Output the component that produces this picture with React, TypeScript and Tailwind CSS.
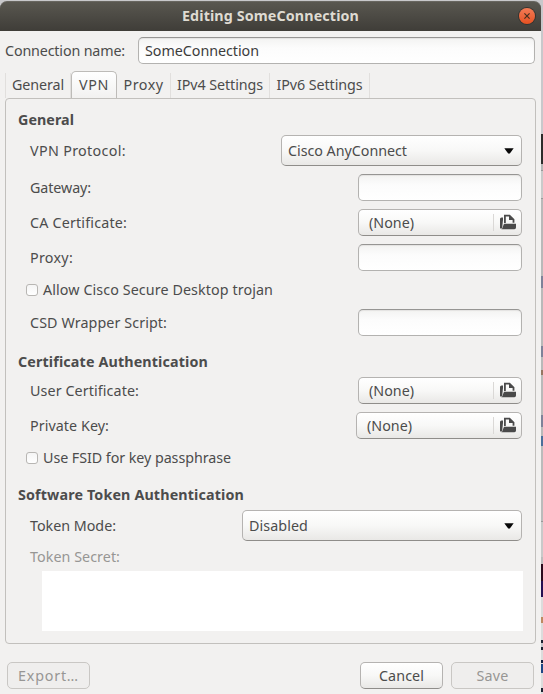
import { useLayoutEffect, useRef, useState } from "react";
import type { ReactNode } from "react";
import clsx from "clsx";

/** Single line label whose tracking is adjusted so it fills the given width. */
function Label({ text, w, className }: { text: string; w: number; className?: string }) {
  const ref = useRef<HTMLSpanElement>(null);
  const [tracking, setTracking] = useState(0);
  useLayoutEffect(() => {
    if (ref.current) {
      const natural = ref.current.getBoundingClientRect().width;
      setTracking((w - natural) / text.length);
    }
  }, [text, w]);
  return (
    <span ref={ref} className={clsx("inline-block shrink-0 whitespace-nowrap", className)} style={{ letterSpacing: tracking }}>
      {text}
    </span>
  );
}

function Heading({ text, w, className }: { text: string; w: number; className: string }) {
  return (
    <h2 className={clsx("flex h-5 items-center pl-3 font-bold", className)}>
      <Label text={text} w={w} />
    </h2>
  );
}

function Row({ text, w, className, children }: { text: string; w: number; className?: string; children: ReactNode }) {
  return (
    <div className={clsx("flex items-center justify-between pr-[13px] pl-6", className)}>
      <Label text={text} w={w} />
      {children}
    </div>
  );
}

const entry =
  "rounded-[5px] border border-[#b3b2b0] border-t-[#969593] bg-linear-to-b from-[#f3f3f2] via-[#fcfcfc] via-40% to-white shadow-[inset_0_1px_1px_#e4e3e2]";
const button =
  "rounded-[5px] border border-[#b5b3b1] border-b-[#8f8d8a] bg-linear-to-b from-white via-[#f8f8f7] to-[#e9e8e6]";

function Entry() {
  return <div className={clsx("h-[27px] w-[164px]", entry)} />;
}

function Select({ text, w, className }: { text: string; w: number; className: string }) {
  return (
    <div className={clsx("flex h-[31px] items-center justify-between pr-[7px] pl-1.5", button, className)}>
      <Label text={text} w={w} />
      <svg width="10" height="6" viewBox="0 0 10 6">
        <path d="M.3.3h9.400L6 5.200q-1 .9-2 0Z" fill="#080808" />
      </svg>
    </div>
  );
}

function FileButton({ className }: { className: string }) {
  return (
    <div className={clsx("flex h-[27px] items-center pr-[5px] pl-2.5", button, className)}>
      <Label text="(None)" w={45} />
      <div className="ml-auto h-[17px] w-px bg-[#dad8d6]" />
      <svg className="mb-0.5 ml-1.5" width="16" height="16" viewBox="0 0 16 16">
        <path d="M0 5q0-1.500 1.500-1.500H3v2.200L2.200 13.500 1.300 14.800Q0 14.800 0 13.500Z" fill="#4a4a4a" />
        <path d="M4 9.800h12v3.800q0 1.700-1.600 1.700H1.300Q2.600 14.800 2.900 12.500Z" fill="#4a4a4a" />
        <path d="M4.900 9V1.700h4.600l4 3.900V8.700" fill="none" stroke="#4a4a4a" strokeWidth="1.800" />
        <path d="M9 1v5h5.300Z" fill="#4a4a4a" />
      </svg>
    </div>
  );
}

function Check({ text, w }: { text: string; w: number }) {
  return (
    <div className="mt-[9px] flex h-5 items-center pl-5">
      <div className="mr-[5px] h-3 w-3 rounded-[3px] border border-[#b8b6b3] bg-linear-to-b from-[#f5f5f5] to-white" />
      <Label text={text} w={w} />
    </div>
  );
}

function Tab({ text, w, active, className }: { text: string; w: number; active?: boolean; className: string }) {
  return (
    <div
      className={clsx(
        "flex items-center justify-center",
        active
          ? "h-[27px] rounded-t-[5px] border border-b-0 border-[#bdbbb8] bg-linear-to-b from-white to-[#f2f1f0]"
          : "h-[25px] border-r border-[#e1dfdd] pb-0.5",
        className,
      )}
    >
      <Label text={text} w={w} />
    </div>
  );
}

/** Slices of the desktop visible past the window's right edge. */
const desktop = [
  "h-[134px] bg-[#c8c8cb]",
  "h-[30px] bg-[#2d2c2b]",
  "h-[6px] bg-[#b5b5b5]",
  "h-px bg-[#999]",
  "h-[27px] bg-[#cacaca]",
  "h-px bg-[#999]",
  "h-[77px] bg-[#b9b9b9]",
  "h-[12px] bg-[#7e8299]",
  "h-[58px] bg-[#b9b9b9]",
  "h-[11px] bg-[#7e8299]",
  "h-[13px] bg-[#b9b9b9]",
  "h-[5px] bg-[#957762]",
  "h-[40px] bg-[#b9b9b9]",
  "h-[12px] bg-[#7e8299]",
  "h-[9px] bg-[#b9b9b9]",
  "h-[10px] bg-[#4a6f9b]",
  "h-[75px] bg-[#bbb]",
  "h-px bg-[#999]",
  "h-[35px] bg-[#c9c9c9]",
  "h-[7px] bg-[#bbb]",
  "h-[17px] bg-[#2b0b1d]",
  "h-[16px] bg-[#251052]",
  "h-[20px] bg-[#dcdcdc]",
  "h-[6px] bg-[#bd8960]",
  "h-[17px] bg-[#dcdcdc]",
  "h-[3px] bg-[#1c2030]",
  "h-[4px] bg-[#c5c5cb]",
  "h-[3px] bg-[#1c2030]",
  "h-[10px] bg-[#dcdcdc]",
  "h-[3px] bg-[#111d3d]",
  "h-px bg-[#dcdcdc]",
  "h-[9px] bg-[#1d4685]",
  "h-[15px] bg-[#dcdcdc]",
  "h-[4px] bg-[#1b2231]",
  "h-[3px] bg-[#dcdcdc]",
];

export default function App() {
  return (
    <div className="flex h-[694px] w-[543px] overflow-hidden bg-[#c8c8cb] font-['Noto_Sans',sans-serif] text-[14.3px] leading-5 text-[#4c4c4c]">
      <div className="flex w-[541px] shrink-0 flex-col pt-px">
        <header className="flex h-[30px] shrink-0 items-center rounded-t-[7px] border-t border-[#686660] bg-linear-to-b from-[#595750] to-[#3f3d38] pr-1.5 pb-px pl-[182px] font-bold text-[#dfdbd2]">
          <Label text="Editing SomeConnection" w={177} />
          <div className="ml-auto flex h-4 w-4 items-center justify-center rounded-full bg-linear-to-b from-[#f37b55] to-[#e5501f] shadow-[0_0_0_1px_#35332f]">
            <svg width="6" height="6" viewBox="0 0 6 6">
              <path d="M.4.4l5.200 5.200M5.600.4L.4 5.600" stroke="#45301f" strokeWidth="1.200" />
            </svg>
          </div>
        </header>
        <main className="flex grow flex-col bg-[#f2f1f0]">
          <div className="mt-1.5 flex h-[27px] items-center pl-[5px]">
            <Label text="Connection name:" w={120} />
            <div className={clsx("ml-[13px] flex h-[27px] w-[397px] items-center pl-1.5 text-[#3c3c3c]", entry)}>
              <Label text="SomeConnection" w={114} />
            </div>
          </div>
          <nav className="mt-[7px] flex h-[27px] items-end pl-[5px]">
            <Tab text="General" w={52} className="w-[66px] border-l" />
            <Tab text="VPN" w={30} active className="w-[46px]" />
            <Tab text="Proxy" w={40} className="w-[54px]" />
            <Tab text="IPv4 Settings" w={86} className="w-[99px]" />
            <Tab text="IPv6 Settings" w={86} className="w-[100px]" />
          </nav>
          <section className="ml-[5px] h-[546px] w-[531px] rounded-[4px] border border-[#c2c0bd]">
            <Heading text="General" w={56} className="mt-[11px]" />
            <Row text="VPN Protocol:" w={96} className="mt-[5px]">
              <Select text="Cisco AnyConnect" w={119} className="w-[241px]" />
            </Row>
            <Row text="Gateway:" w={61} className="mt-2">
              <Entry />
            </Row>
            <Row text="CA Certificate:" w={97} className="mt-2">
              <FileButton className="w-[164px]" />
            </Row>
            <Row text="Proxy:" w={43} className="mt-2">
              <Entry />
            </Row>
            <Check text="Allow Cisco Secure Desktop trojan" w={230} />
            <Row text="CSD Wrapper Script:" w={137} className="mt-[9px]">
              <Entry />
            </Row>
            <Heading text="Certificate Authentication" w={190} className="mt-4" />
            <Row text="User Certificate:" w={109} className="mt-[5px]">
              <FileButton className="w-[164px]" />
            </Row>
            <Row text="Private Key:" w={79} className="mt-2">
              <FileButton className="w-[166px]" />
            </Row>
            <Check text="Use FSID for key passphrase" w={188} />
            <Heading text="Software Token Authentication" w={226} className="mt-[17px]" />
            <Row text="Token Mode:" w={86} className="mt-[5px]">
              <Select text="Disabled" w={59} className="w-[280px]" />
            </Row>
            <div className="mt-1.5 flex h-5 items-center pl-6 text-[#979694]">
              <Label text="Token Secret:" w={90} />
            </div>
            <div className="mt-1 ml-9 h-[60px] w-[481px] bg-white" />
          </section>
          <footer className="mt-[18px] flex h-[27px] gap-2 pr-[7px] pl-[7px]">
            <div className="mr-auto flex w-[83px] items-center justify-center rounded-[5px] border border-[#c9c7c4] bg-[#efeeed] text-[#979694]">
              <Label text="Export…" w={61} />
            </div>
            <div className={clsx("flex w-[83px] items-center justify-center", button)}>
              <Label text="Cancel" w={45} />
            </div>
            <div className="flex w-[83px] items-center justify-center rounded-[5px] border border-[#c9c7c4] bg-[#efeeed] text-[#979694]">
              <Label text="Save" w={32} />
            </div>
          </footer>
        </main>
      </div>
      <div className="flex w-0.5 shrink-0 flex-col">
        {desktop.map((slice, i) => (
          <div key={i} className={clsx("shrink-0", slice)} />
        ))}
      </div>
    </div>
  );
}
